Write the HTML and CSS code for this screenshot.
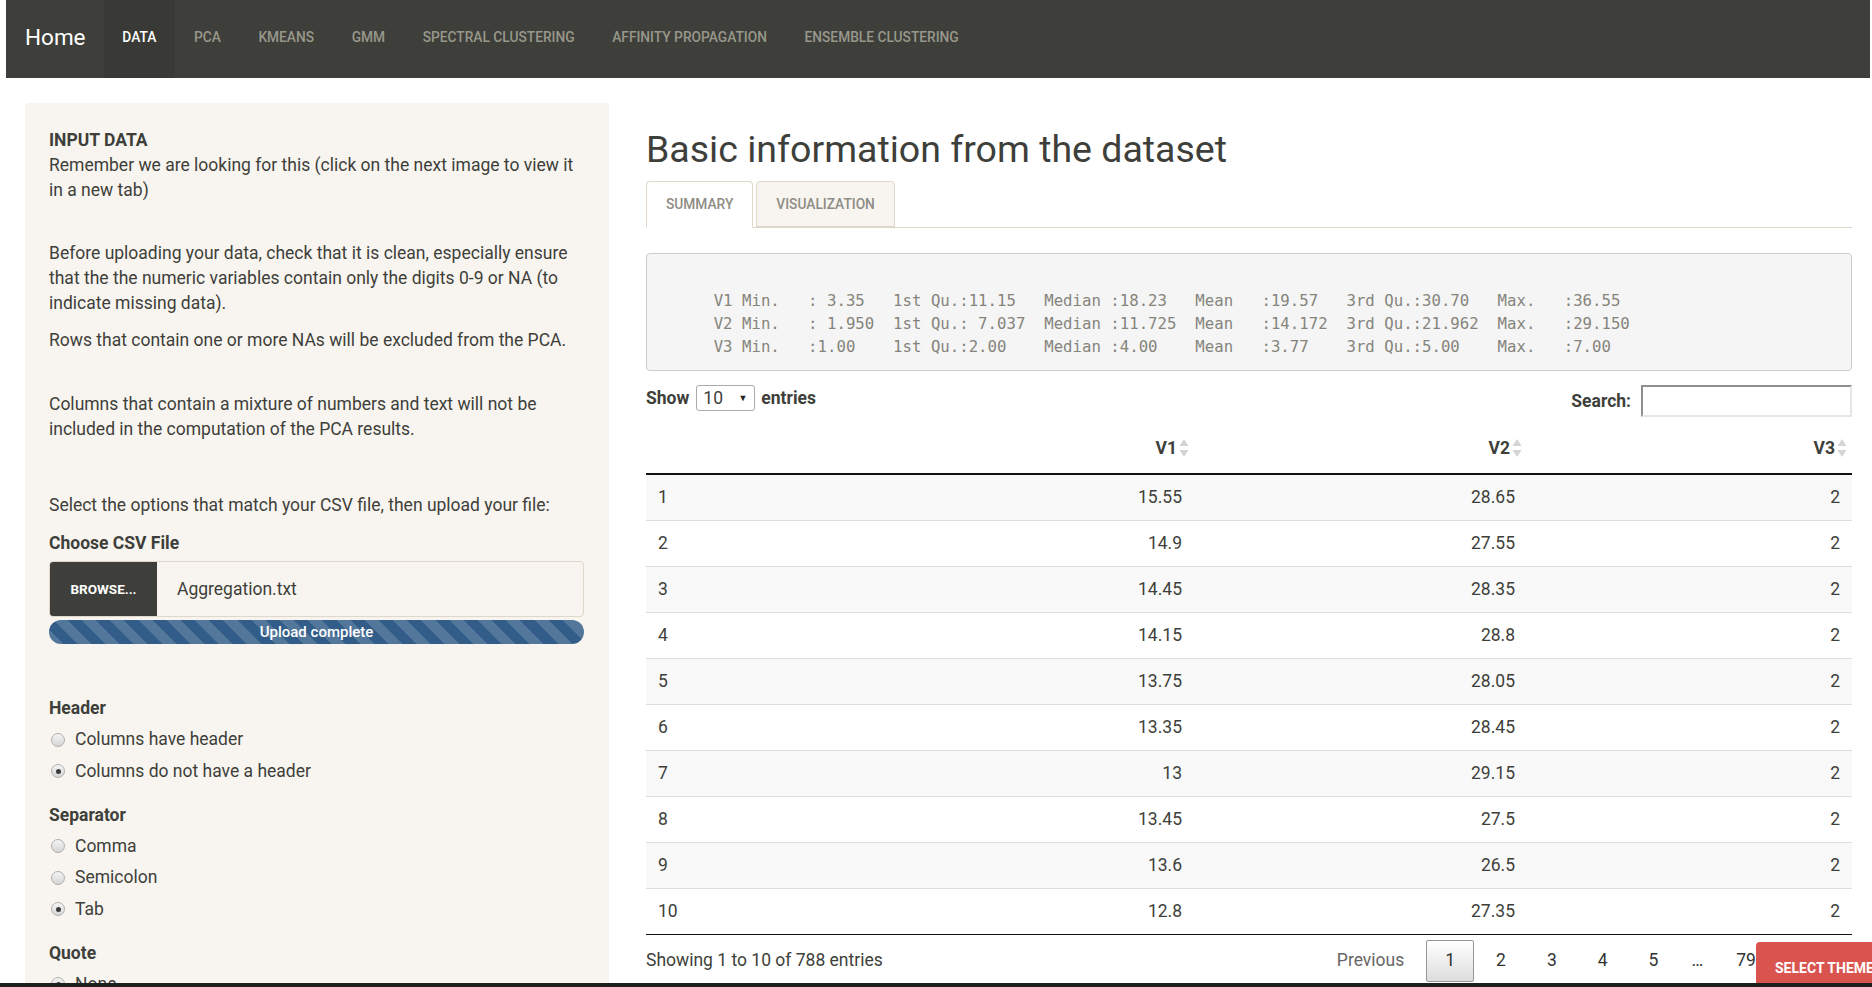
FILE: index.html
```html
<!DOCTYPE html>
<html lang="en">
<head>
<meta charset="utf-8">
<title>Clustering</title>
<link rel="stylesheet" href="styles.css">
</head>
<body>
<nav class="navbar">
  <a class="brand">Home</a>
  <ul class="nav">
    <li class="active"><a>Data</a></li>
    <li><a>PCA</a></li>
    <li><a>Kmeans</a></li>
    <li><a>GMM</a></li>
    <li><a>Spectral clustering</a></li>
    <li><a>Affinity propagation</a></li>
    <li><a>Ensemble clustering</a></li>
  </ul>
</nav>

<div class="content">
  <aside class="well">
    <p class="intro"><strong>INPUT DATA</strong><br>Remember we are looking for this (click on the next image to view it in a new tab)</p>
    <p class="p2">Before uploading your data, check that it is clean, especially ensure that the the numeric variables contain only the digits 0-9 or NA (to indicate missing data).</p>
    <p class="p3">Rows that contain one or more NAs will be excluded from the PCA.</p>
    <p class="p4">Columns that contain a mixture of numbers and text will not be included in the computation of the PCA results.</p>
    <p class="p5">Select the options that match your CSV file, then upload your file:</p>
    <div class="label file-label">Choose CSV File</div>
    <div class="file-input">
      <span class="browse">Browse...</span>
      <span class="file-name">Aggregation.txt</span>
    </div>
    <div class="progress"><span>Upload complete</span></div>

    <div class="group">
      <div class="label">Header</div>
      <div class="radio"><span class="dot"></span>Columns have header</div>
      <div class="radio"><span class="dot checked"></span>Columns do not have a header</div>
    </div>
    <div class="group">
      <div class="label">Separator</div>
      <div class="radio"><span class="dot"></span>Comma</div>
      <div class="radio"><span class="dot"></span>Semicolon</div>
      <div class="radio"><span class="dot checked"></span>Tab</div>
    </div>
    <div class="group">
      <div class="label">Quote</div>
      <div class="radio"><span class="dot checked"></span>None</div>
      <div class="radio"><span class="dot"></span>Double Quote</div>
      <div class="radio"><span class="dot"></span>Single Quote</div>
    </div>
  </aside>

  <main class="main">
    <h1 class="title">Basic information from the dataset</h1>
    <ul class="tabs">
      <li class="tab active">Summary</li>
      <li class="tab">Visualization</li>
    </ul>
    <pre class="summary">

      V1 Min.   : 3.35   1st Qu.:11.15   Median :18.23   Mean   :19.57   3rd Qu.:30.70   Max.   :36.55  
      V2 Min.   : 1.950  1st Qu.: 7.037  Median :11.725  Mean   :14.172  3rd Qu.:21.962  Max.   :29.150  
      V3 Min.   :1.00    1st Qu.:2.00    Median :4.00    Mean   :3.77    3rd Qu.:5.00    Max.   :7.00    </pre>

    <div class="dt-top">
      <div class="length">Show <span class="select">10<span class="caret">&#9660;</span></span> entries</div>
      <div class="search">Search: <span class="search-input"></span></div>
    </div>

    <table class="dt">
      <colgroup><col class="c0"><col class="c1"><col class="c2"><col class="c3"></colgroup>
      <thead>
        <tr>
          <th></th>
          <th>V1<svg class="sort" viewBox="0 0 10 20" width="10" height="20"><path d="M5 1 L9.5 8 L0.5 8 Z"/><path d="M5 19 L9.5 12 L0.5 12 Z"/></svg></th>
          <th>V2<svg class="sort" viewBox="0 0 10 20" width="10" height="20"><path d="M5 1 L9.5 8 L0.5 8 Z"/><path d="M5 19 L9.5 12 L0.5 12 Z"/></svg></th>
          <th>V3<svg class="sort" viewBox="0 0 10 20" width="10" height="20"><path d="M5 1 L9.5 8 L0.5 8 Z"/><path d="M5 19 L9.5 12 L0.5 12 Z"/></svg></th>
        </tr>
      </thead>
      <tbody>
        <tr><td>1</td><td>15.55</td><td>28.65</td><td>2</td></tr>
        <tr><td>2</td><td>14.9</td><td>27.55</td><td>2</td></tr>
        <tr><td>3</td><td>14.45</td><td>28.35</td><td>2</td></tr>
        <tr><td>4</td><td>14.15</td><td>28.8</td><td>2</td></tr>
        <tr><td>5</td><td>13.75</td><td>28.05</td><td>2</td></tr>
        <tr><td>6</td><td>13.35</td><td>28.45</td><td>2</td></tr>
        <tr><td>7</td><td>13</td><td>29.15</td><td>2</td></tr>
        <tr><td>8</td><td>13.45</td><td>27.5</td><td>2</td></tr>
        <tr><td>9</td><td>13.6</td><td>26.5</td><td>2</td></tr>
        <tr><td>10</td><td>12.8</td><td>27.35</td><td>2</td></tr>
      </tbody>
    </table>

    <div class="dt-bottom">
      <div class="info">Showing 1 to 10 of 788 entries</div>
      <div class="paginate">
        <span class="pbtn disabled">Previous</span>
        <span class="pbtn current">1</span>
        <span class="pbtn">2</span>
        <span class="pbtn">3</span>
        <span class="pbtn">4</span>
        <span class="pbtn">5</span>
        <span class="pbtn ellipsis">…</span>
        <span class="pbtn">79</span>
        <span class="pbtn">Next</span>
      </div>
    </div>
  </main>
</div>

<div class="theme-btn">Select theme</div>
<div class="bottom-bar"></div>
</body>
</html>
```

FILE: styles.css
```css
html, body {
  margin: 0;
  padding: 0;
  overflow: hidden;
  height: 987px;
}
body {
  font-family: Roboto, "Liberation Sans", sans-serif;
  font-size: 17.5px;
  line-height: 25px;
  color: #3e3f3a;
  background: #fff;
}

/* navbar */
.navbar {
  display: flex;
  align-items: stretch;
  height: 78px;
  margin: 0 2px 0 6px;
  background: #3e3f3a;
}
.brand {
  display: flex;
  align-items: center;
  box-sizing: border-box;
  padding: 0 18px 3px 19px;
  font-size: 22.5px;
  color: #fff;
}
.nav {
  display: flex;
  margin: 0;
  padding: 0;
  list-style: none;
}
.nav li { display: flex; }
.nav li a {
  display: flex;
  align-items: center;
  box-sizing: border-box;
  height: 78px;
  padding: 0 18.8px 4px;
  font-size: 13.75px;
  font-weight: 500;
  text-transform: uppercase;
  color: #98978b;
}
.nav li.active a {
  background: #393a35;
  color: #fff;
}

/* layout */
.content {
  display: grid;
  grid-template-columns: 584px 1206px;
  column-gap: 37px;
  padding: 25px 0 0 25px;
  align-items: start;
}

/* sidebar well */
.well {
  background: #f8f5f0;
  border-radius: 4px;
  padding: 25px 25px 40px 24px;
}
.well p { margin: 0; }
.intro { margin-bottom: 38px !important; }
.p2 { margin-bottom: 12px !important; }
.p3 { margin-bottom: 39px !important; }
.p4 { margin-bottom: 51px !important; }
.p5 { margin-bottom: 13px !important; }
.label { font-weight: 700; }
.file-label { margin-bottom: 5px; }
.file-input {
  display: flex;
  height: 56px;
  border: 1px solid #dfd7ca;
  border-radius: 4px;
  box-sizing: border-box;
  overflow: hidden;
  background: #f8f5f0;
}
.browse {
  display: flex;
  align-items: center;
  justify-content: center;
  width: 107px;
  background: #3e3f3a;
  color: #fff;
  font-size: 13.5px;
  font-weight: 700;
  text-transform: uppercase;
}
.file-name {
  display: flex;
  align-items: center;
  padding-left: 20px;
}
.progress {
  margin-top: 3px;
  height: 24px;
  border-radius: 12px;
  background-color: #325d88;
  background-image: repeating-linear-gradient(45deg, rgba(255,255,255,0.16) 0 10px, transparent 10px 20px);
  color: #fff;
  font-size: 15px;
  font-weight: 500;
  line-height: 24px;
  text-align: center;
  margin-bottom: 52px;
}
.group { margin-bottom: 19px; }
.group .label { margin-bottom: 6px; }
.radio {
  display: flex;
  align-items: center;
  height: 25px;
  margin-bottom: 6.5px;
}
.dot {
  box-sizing: border-box;
  width: 14px;
  height: 14px;
  margin: 0 10px 0 2px;
  border-radius: 50%;
  border: 1px solid #b0b0b0;
  background: linear-gradient(#f4f4f4, #d6d6d6);
  position: relative;
}
.dot.checked::after {
  content: "";
  position: absolute;
  left: 3.5px;
  top: 3.5px;
  width: 5px;
  height: 5px;
  border-radius: 50%;
  background: #3a3a3a;
}

/* main */
.main { min-width: 0; }
.title {
  margin: 25px 0 11px;
  font-size: 37.5px;
  line-height: 42px;
  font-weight: 400;
  color: #3e3f3a;
}
.tabs {
  display: flex;
  margin: 0;
  padding: 0;
  list-style: none;
  border-bottom: 1px solid #dfd7ca;
  height: 46px;
}
.tab {
  display: flex;
  align-items: center;
  height: 46px;
  box-sizing: border-box;
  padding: 0 19px;
  margin-right: 3px;
  border: 1px solid #dfd7ca;
  border-radius: 4px 4px 0 0;
  background: #f8f5f0;
  color: #8e8c84;
  font-size: 13.75px;
  font-weight: 500;
  text-transform: uppercase;
}
.tab.active {
  background: #fff;
  border-bottom-color: #fff;
  height: 47px;
}
.summary {
  margin: 25px 0 0;
  padding: 12px 10px;
  background: #f5f5f5;
  border: 1px solid #cccccc;
  border-radius: 4px;
  font-family: "DejaVu Sans Mono", "Liberation Mono", monospace;
  font-size: 15.7px;
  line-height: 23px;
  color: #85847c;
  white-space: pre;
  overflow: hidden;
}

.dt-top {
  display: flex;
  justify-content: space-between;
  align-items: flex-start;
  margin-top: 14px;
  font-weight: 700;
}
.length {
  display: flex;
  align-items: center;
  height: 26px;
}
.select {
  display: inline-flex;
  align-items: center;
  justify-content: space-between;
  box-sizing: border-box;
  width: 59px;
  height: 26px;
  margin: 0 6px 0 7px;
  padding: 0 7px 0 6px;
  border: 1px solid #aaa;
  border-radius: 3px;
  font-weight: 400;
  background: #fff;
}
.caret { font-size: 9px; line-height: 1; color: #222; }
.search {
  display: flex;
  align-items: center;
  height: 32px;
}
.search-input {
  display: inline-block;
  box-sizing: border-box;
  width: 211px;
  height: 32px;
  margin-left: 10px;
  border: 2px solid #e6e6e6;
  border-top-color: #8f8f8f;
  border-left-color: #8f8f8f;
  background: #fff;
}

/* table */
.dt {
  width: 100%;
  table-layout: fixed;
  border-collapse: collapse;
  margin-top: 7px;
}
.c0 { width: 224px; }
.c1 { width: 324px; }
.c2 { width: 333px; }
.c3 { width: 325px; }
.dt th {
  height: 49px;
  padding: 0 5px 0 12px;
  text-align: right;
  font-weight: 700;
  border-bottom: 2px solid #111;
  vertical-align: middle;
  white-space: nowrap;
}
.sort {
  display: inline-block;
  vertical-align: -4px;
  margin-left: 2px;
  fill: #d4d4d4;
}
.dt td {
  height: 46px;
  box-sizing: border-box;
  padding: 0 12px;
  text-align: right;
  border-top: 1px solid #ddd;
}
.dt tbody tr:first-child td { border-top: none; }
.dt td:first-child { text-align: left; }
.dt tbody tr:nth-child(odd) td { background: #f9f9f9; }
.dt tbody tr:last-child td { border-bottom: 1px solid #111; }

.dt-bottom {
  display: flex;
  justify-content: space-between;
  align-items: center;
  margin-top: 5px;
  height: 42px;
}
.paginate { display: flex; }
.pbtn {
  display: flex;
  align-items: center;
  justify-content: center;
  box-sizing: border-box;
  min-width: 47px;
  height: 42px;
  padding: 0 18px;
  margin-left: 3px;
  border: 1px solid transparent;
  border-radius: 2px;
  color: #333;
}
.pbtn:first-child { margin-left: 0; }
.pbtn.disabled { color: #666; }
.pbtn.ellipsis { min-width: 0; padding: 0 10px; }
.pbtn.current {
  border-color: #979797;
  background: linear-gradient(#fff, #dcdcdc);
}

/* overlays */
.theme-btn {
  position: fixed;
  left: 1756px;
  top: 942px;
  width: 140px;
  height: 60px;
  box-sizing: border-box;
  padding: 17px 0 0 19px;
  background: #d9534f;
  border-radius: 4px 0 0 0;
  color: #fff;
  font-size: 14px;
  font-weight: 700;
  line-height: 18px;
  text-transform: uppercase;
  white-space: nowrap;
}
.bottom-bar {
  position: fixed;
  left: 0;
  right: 0;
  bottom: 0;
  height: 4px;
  background: #1f1f1f;
}
```
